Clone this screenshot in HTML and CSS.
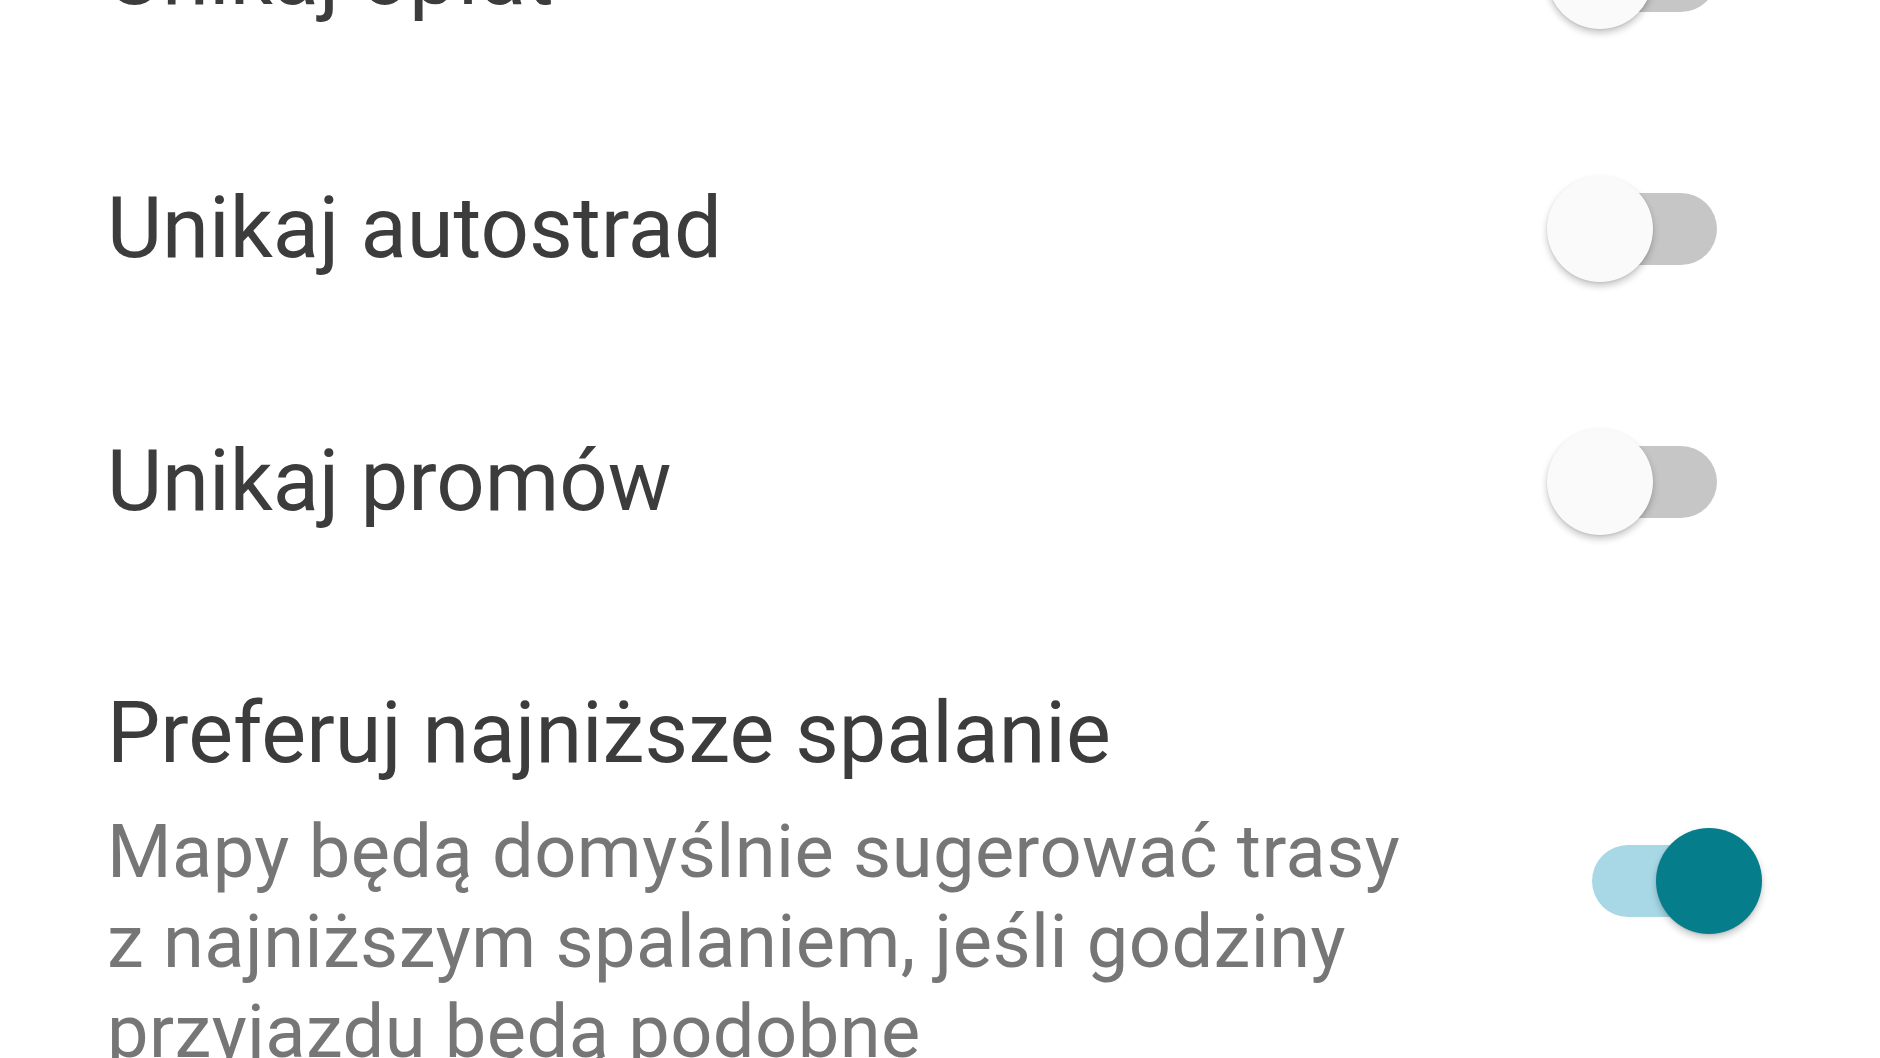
FILE: index.html
```html
<!DOCTYPE html>
<html>
  <head>
    <title>Opcje trasy</title>
    <link rel="stylesheet" href="styles.css">
  </head>
  <body>

    <div class="settings">

      <div class="row">
        <span class="label">Unikaj opłat</span>
        <span class="switch"><span class="track"></span><span class="thumb"></span></span>
      </div>

      <div class="row">
        <span class="label">Unikaj autostrad</span>
        <span class="switch"><span class="track"></span><span class="thumb"></span></span>
      </div>

      <div class="row">
        <span class="label">Unikaj promów</span>
        <span class="switch"><span class="track"></span><span class="thumb"></span></span>
      </div>

      <div class="row row-detail">
        <div class="text">
          <div class="label">Preferuj najniższe spalanie</div>
          <div class="desc">Mapy będą domyślnie sugerować trasy z najniższym spalaniem, jeśli godziny przyjazdu będą podobne</div>
        </div>
        <span class="switch on"><span class="track"></span><span class="thumb"></span></span>
      </div>

    </div>

  </body>
</html>
```

FILE: styles.css
```css
body {
  margin: 0;
  background: #fff;
  font-family: Roboto, "Noto Sans", sans-serif;
  overflow: hidden;
}

/* list is scrolled so the first row is half off screen */
.settings { margin-top: -155px; padding-left: 107px; }

.row {
  display: flex;
  align-items: center;
  justify-content: space-between;
  height: 253px;
  padding-right: 163px;
}
.row .switch { margin-top: 8px; }
.label {
  font-size: 85px;
  line-height: 100px;
  color: #3c3c3c;
  padding-top: 6px;
}

.row-detail { height: auto; padding-top: 80px; padding-right: 118px; }
.row-detail .label { padding-top: 0; font-size: 84.5px; }
.row-detail .switch { margin-top: 0; }
.text { max-width: 1320px; }
.desc {
  margin-top: 23px;
  font-size: 74px;
  line-height: 90px;
  letter-spacing: 0.45px;
  color: #767676;
}

/* toggle: 170 x 106, thumb sits over the track */
.switch {
  position: relative;
  flex: none;
  width: 170px;
  height: 106px;
}
.track {
  position: absolute;
  top: 17px;
  left: 17px;
  width: 153px;
  height: 72px;
  border-radius: 36px;
  background: #c6c6c6;
}
.thumb {
  position: absolute;
  top: 0;
  left: 0;
  width: 106px;
  height: 106px;
  border-radius: 50%;
  background: #fafafa;
  box-shadow: 0 4px 7px rgba(0, 0, 0, 0.22), 0 1px 2px rgba(0, 0, 0, 0.08);
}
.switch.on .track { left: 0; background: #a8d8e6; }
.switch.on .thumb { left: 64px; background: #067d8b; }
```
